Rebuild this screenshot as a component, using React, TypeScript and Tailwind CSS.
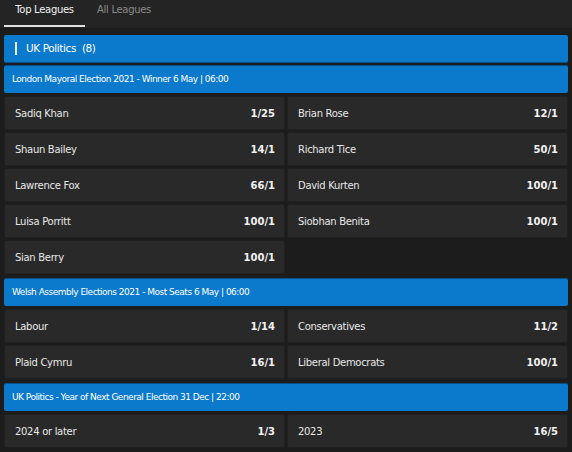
import React from "react";

type Sel = { name: string; odds: string };

const sections: { title: string; items: Sel[] }[] = [
  {
    title: "London Mayoral Election 2021 - Winner 6 May | 06:00",
    items: [
      { name: "Sadiq Khan", odds: "1/25" },
      { name: "Brian Rose", odds: "12/1" },
      { name: "Shaun Bailey", odds: "14/1" },
      { name: "Richard Tice", odds: "50/1" },
      { name: "Lawrence Fox", odds: "66/1" },
      { name: "David Kurten", odds: "100/1" },
      { name: "Luisa Porritt", odds: "100/1" },
      { name: "Siobhan Benita", odds: "100/1" },
      { name: "Sian Berry", odds: "100/1" },
    ],
  },
  {
    title: "Welsh Assembly Elections 2021 - Most Seats 6 May | 06:00",
    items: [
      { name: "Labour", odds: "1/14" },
      { name: "Conservatives", odds: "11/2" },
      { name: "Plaid Cymru", odds: "16/1" },
      { name: "Liberal Democrats", odds: "100/1" },
    ],
  },
  {
    title: "UK Politics - Year of Next General Election 31 Dec | 22:00",
    items: [
      { name: "2024 or later", odds: "1/3" },
      { name: "2023", odds: "16/5" },
    ],
  },
];

export default function App() {
  return (
    <div
      className="w-[572px] h-[452px] overflow-hidden bg-[#1c1c1c] text-[#e6e6e6]"
      style={{ fontFamily: '"DejaVu Sans", Verdana, sans-serif' }}
    >
      <div className="h-[29px] bg-[#242424] flex items-end pl-[4px] border-b border-[#1a1a1a]">
        <div className="w-[81px] h-[28px] flex flex-col">
          <div className="flex-1 flex items-start pt-[2px] justify-center text-[10px] tracking-[-0.3px] text-[#f2f2f2]">
            Top Leagues
          </div>
          <div className="h-[2px] mb-[1px] bg-[#e0e0e0]" />
        </div>
        <div className="h-[28px] pt-[2px] ml-[12px] flex items-start text-[10px] tracking-[-0.3px] text-[#8a8a8a]">
          All Leagues
        </div>
      </div>

      <div className="px-[4px] pt-[6px] flex flex-col">
        <div className="h-[28px] bg-[#0b79cc] rounded-[2px] border-b border-[#0a4f85] flex items-center pl-[11px]">
          <div className="w-[2px] h-[13px] bg-[#f0f0f0] mr-[9px]" />
          <span className="text-[10.5px] tracking-[-0.4px] text-white">UK Politics&nbsp;&nbsp;(8)</span>
        </div>
        {sections.map((s, i) => (
          <div key={s.title} className={i === 0 ? "mt-[2px]" : "mt-[4px]"}>
            <div className="h-[28px] bg-[#0b79cc] rounded-[2px] border-t border-[#0a4f85] flex items-center pl-[8px] text-[9px] tracking-[-0.5px] text-white">
              {s.title}
            </div>
            <div className="mt-[3px] grid grid-cols-2 gap-[2px]">
              {s.items.map((it) => (
                <div
                  key={it.name}
                  className="h-[34px] bg-[#292929] border border-[#202020] rounded-[2px] flex items-center justify-between pl-[10px] pr-[9px]"
                >
                  <span className="text-[10px] tracking-[-0.3px] text-[#e8e8e8]">{it.name}</span>
                  <span className="text-[10px] font-bold text-[#f2f2f2]">{it.odds}</span>
                </div>
              ))}
            </div>
          </div>
        ))}
      </div>
    </div>
  );
}
